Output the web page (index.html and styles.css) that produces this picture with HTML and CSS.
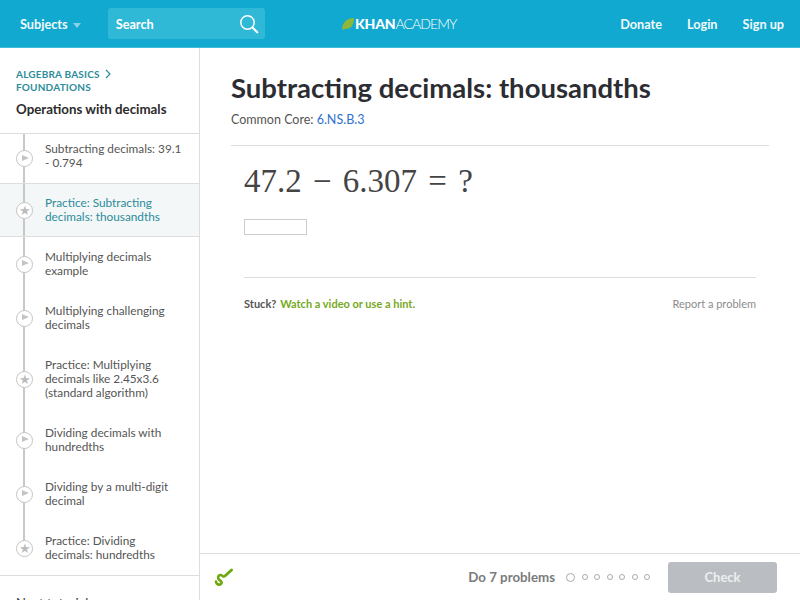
FILE: index.html
```html
<!DOCTYPE html>
<html lang="en">
<head>
  <meta charset="UTF-8" />
  <title>Subtracting decimals: thousandths</title>
  <link rel="stylesheet" href="styles.css">
</head>
<body>

  <header class="topbar">
    <div class="topbar-left">
      <a class="nav-link subjects">Subjects <span class="caret"></span></a>
      <div class="search">
        <span>Search</span>
        <svg width="20" height="20" viewBox="0 0 20 20" fill="none" stroke="#fff">
          <circle cx="8.5" cy="8.5" r="6.7" stroke-width="1.5"/>
          <path d="M13.5 13.5l4.7 4.7" stroke-width="2.2" stroke-linecap="round"/>
        </svg>
      </div>
    </div>
    <div class="logo">
      <svg width="12" height="12" viewBox="0 0 12 12"><path d="M0 12C0 5 4 0 12 0c0 7-3 11-8 11-2 0-3 0-4 1z" fill="#8cb73a"/></svg>
      <span class="logo-text"><b>KHAN</b>ACADEMY</span>
    </div>
    <nav class="topbar-right">
      <a class="nav-link">Donate</a>
      <a class="nav-link">Login</a>
      <a class="nav-link">Sign up</a>
    </nav>
  </header>

  <div class="page">
    <aside class="sidebar">
      <div class="side-head">
        <div class="crumb">ALGEBRA BASICS
          <svg width="7" height="10" viewBox="0 0 7 10" fill="none" stroke="#2c8c9c" stroke-width="1.2"><path d="M1 1l4 4-4 4"/></svg>
        </div>
        <div class="crumb">FOUNDATIONS</div>
        <h2>Operations with decimals</h2>
      </div>
      <ul class="steps">
        <li class="step"><span class="dot play"></span><span>Subtracting decimals: 39.1 - 0.794</span></li>
        <li class="step active"><span class="dot star">&#9733;</span><span>Practice: Subtracting decimals: thousandths</span></li>
        <li class="step"><span class="dot play"></span><span>Multiplying decimals example</span></li>
        <li class="step"><span class="dot play"></span><span>Multiplying challenging decimals</span></li>
        <li class="step"><span class="dot star">&#9733;</span><span>Practice: Multiplying decimals like 2.45x3.6 (standard algorithm)</span></li>
        <li class="step"><span class="dot play"></span><span>Dividing decimals with hundredths</span></li>
        <li class="step"><span class="dot play"></span><span>Dividing by a multi-digit decimal</span></li>
        <li class="step last"><span class="dot star">&#9733;</span><span>Practice: Dividing decimals: hundredths</span></li>
      </ul>
      <div class="next">Next tutorial</div>
    </aside>

    <main class="content">
      <div class="title-block">
        <h1>Subtracting decimals: thousandths</h1>
        <p class="core">Common Core: <a>6.NS.B.3</a></p>
      </div>
      <div class="exercise">
        <div class="problem">47.2 &minus; 6.307 = ?</div>
        <div class="answer"></div>
        <div class="help">
          <div><b class="stuck">Stuck?</b> <b class="hint">Watch a video or use a hint.</b></div>
          <a class="report">Report a problem</a>
        </div>
      </div>
      <footer class="bottombar">
        <svg class="scratch" width="22" height="20" viewBox="0 0 22 20" fill="none" stroke="#6fa80f" stroke-linecap="round" stroke-linejoin="round">
          <path d="M3 14.500c0 2.500 3 4 5 2.500s-.5-3-2-4.500-1-4 1-4.500 3 2 4 1.500" stroke-width="2.600"/>
          <path d="M12.500 8.500l6-5.500" stroke-width="3"/>
        </svg>
        <div class="progress">
          <span class="do">Do 7 problems</span>
          <span class="pips">
            <i class="pip first"></i><i class="pip"></i><i class="pip"></i><i class="pip"></i><i class="pip"></i><i class="pip"></i><i class="pip"></i>
          </span>
          <button class="check">Check</button>
        </div>
      </footer>
    </main>
  </div>

</body>
</html>
```

FILE: styles.css
```css
* { box-sizing: border-box; }

html, body {
  height: 100%;
}

body {
  margin: 0;
  height: 600px;
  overflow: hidden;
  font-family: Lato, 'Open Sans', sans-serif;
  color: #444;
  background: #fff;
  display: flex;
  flex-direction: column;
}

.topbar {
  height: 48px;
  flex: none;
  background: #11a9cf;
  border-bottom: 1px solid #3fbcd9;
  display: flex;
  align-items: center;
  justify-content: space-between;
  padding: 0 16px 0 20px;
  position: relative;
}

.topbar-left {
  display: flex;
  align-items: center;
  gap: 27px;
}

.nav-link {
  color: #fff;
  font-size: 12.7px;
  font-weight: 700;
  opacity: 0.95;
}

.caret {
  display: inline-block;
  margin-left: 2px;
  vertical-align: 1px;
  border-left: 4px solid transparent;
  border-right: 4px solid transparent;
  border-top: 5px solid #8fd6ea;
}

.search {
  width: 157px;
  height: 31px;
  background: #2fb9d7;
  border-radius: 3px;
  color: #fff;
  font-size: 12.7px;
  font-weight: 700;
  display: flex;
  align-items: center;
  justify-content: space-between;
  padding: 0 6px 0 8px;
}

.logo {
  position: absolute;
  left: 342px;
  top: 17px;
  display: flex;
  align-items: center;
  gap: 1px;
}

.logo-text {
  color: #fff;
  font-size: 14px;
  font-weight: 300;
  letter-spacing: -0.9px;
  line-height: 14px;
}

.logo-text b {
  font-weight: 900;
  letter-spacing: -0.2px;
}

.topbar-right {
  display: flex;
  gap: 25px;
}

.page {
  flex: 1;
  display: flex;
  min-height: 0;
}

.sidebar {
  width: 200px;
  flex: none;
  border-right: 1px solid #ddd;
  overflow: hidden;
}

.side-head {
  height: 86px;
  padding: 20px 16px 0;
  border-bottom: 1px solid #ddd;
}

.crumb {
  font-size: 10px;
  font-weight: 700;
  letter-spacing: 0.2px;
  line-height: 13px;
  color: #2c8c9c;
}

.crumb svg {
  margin-left: 3px;
  vertical-align: -1px;
}

.side-head h2 {
  margin: 6px 0 0;
  font-size: 13.3px;
  font-weight: 700;
  line-height: 18px;
  color: #2b2b2b;
}

.steps {
  list-style: none;
  margin: 0;
  padding: 0;
  border-bottom: 1px solid #ddd;
}

.step {
  display: flex;
  align-items: center;
  position: relative;
  padding: 13px 14px 13px 45px;
  font-size: 11.8px;
  line-height: 14px;
  color: #555;
}

.step:first-child {
  padding-top: 8px;
}

.step::before {
  content: "";
  position: absolute;
  left: 23px;
  top: 0;
  bottom: 0;
  width: 2px;
  background: #c8c8c8;
}

.step.last::before {
  bottom: 50%;
}

.step.active {
  padding-top: 12px;
  padding-bottom: 12px;
  background: #f3f7f7;
  border-top: 1px solid #ddd;
  border-bottom: 1px solid #ddd;
  color: #2c8c9c;
}

.dot {
  position: absolute;
  left: 16px;
  top: 50%;
  margin-top: -8.5px;
  width: 17px;
  height: 17px;
  border: 1.5px solid #c4c4c4;
  border-radius: 50%;
  background: #fff;
  color: #bcbcbc;
  font-size: 13px;
  line-height: 14px;
  text-align: center;
}

.play::after {
  content: "";
  position: absolute;
  left: 5px;
  top: 3.5px;
  border-left: 7px solid #c4c4c4;
  border-top: 3.5px solid transparent;
  border-bottom: 3.5px solid transparent;
}

.next {
  padding: 19px 16px 0;
  font-size: 13px;
  color: #333;
}

.content {
  flex: 1;
  position: relative;
  min-width: 0;
}

.title-block {
  margin: 0 31px;
  padding-top: 22px;
  height: 98px;
  border-bottom: 1px solid #ddd;
}

h1 {
  margin: 0;
  font-size: 27.5px;
  font-weight: 700;
  line-height: 36px;
  color: #2b2d33;
}

.core {
  margin: 5px 0 0;
  font-size: 12.5px;
  line-height: 18px;
  color: #555;
}

.core a {
  color: #2f6fd0;
}

.exercise {
  margin: 0 44px;
}

.problem {
  margin-top: 14px;
  font-family: 'Liberation Serif', serif;
  font-size: 33px;
  line-height: 42px;
  word-spacing: 3px;
  color: #444;
}

.answer {
  width: 63px;
  height: 16px;
  margin-top: 17px;
  border: 1px solid #ccc;
  background: #fff;
}

.help {
  margin-top: 42px;
  padding-top: 19px;
  border-top: 1px solid #ddd;
  display: flex;
  justify-content: space-between;
  font-size: 11px;
  line-height: 14px;
}

.stuck {
  color: #555;
  margin-right: 1px;
}

.hint {
  color: #76a923;
}

.report {
  color: #8b8b8b;
}

.bottombar {
  position: absolute;
  left: 0;
  right: 0;
  bottom: 0;
  height: 47px;
  border-top: 1px solid #ddd;
  background: #fff;
  display: flex;
  align-items: center;
  justify-content: space-between;
  padding: 0 23px 0 13px;
}

.progress {
  display: flex;
  align-items: center;
}

.do {
  font-size: 13.3px;
  font-weight: 700;
  color: #7b7b7b;
}

.pips {
  display: flex;
  align-items: center;
  gap: 6.5px;
  margin: 0 18px 0 11px;
}

.pip {
  width: 6px;
  height: 6px;
  border: 1px solid #aaa;
  border-radius: 50%;
}

.pip.first {
  width: 9px;
  height: 9px;
}

.check {
  width: 109px;
  height: 31px;
  border: none;
  border-radius: 3px;
  background: #babec2;
  color: #eceef0;
  font-family: inherit;
  font-size: 13px;
  font-weight: 700;
}
```
